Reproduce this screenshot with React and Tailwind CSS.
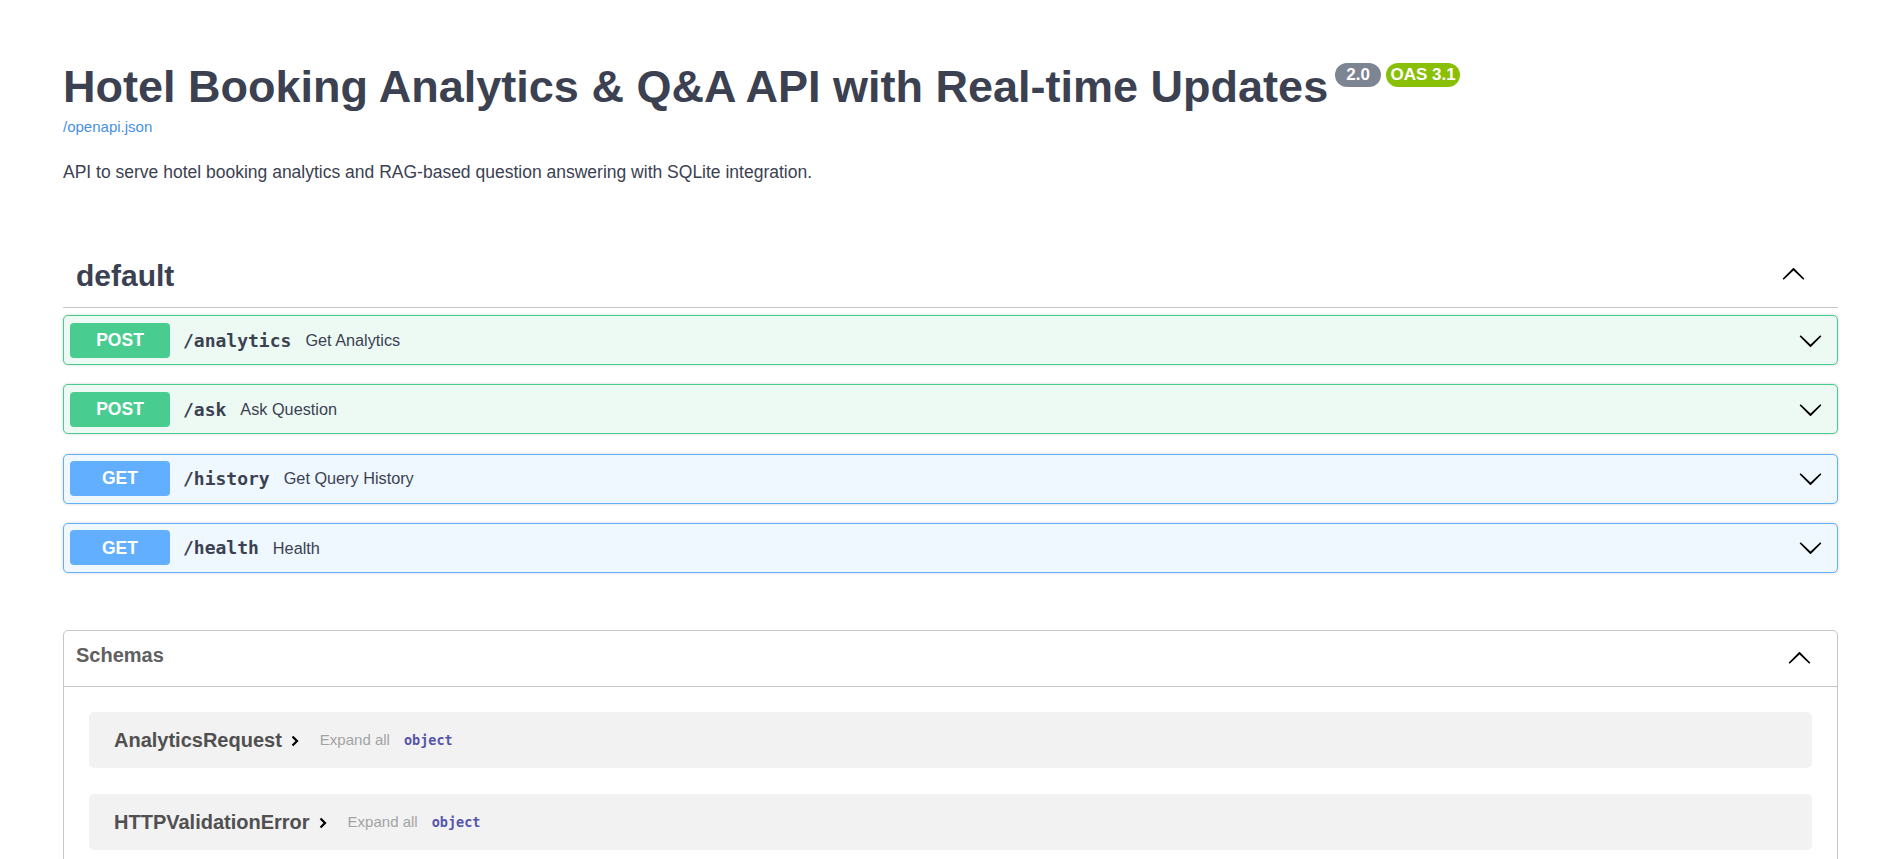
import React from "react";

const ops = [
  { method: "POST", path: "/analytics", summary: "Get Analytics" },
  { method: "POST", path: "/ask", summary: "Ask Question" },
  { method: "GET", path: "/history", summary: "Get Query History" },
  { method: "GET", path: "/health", summary: "Health" },
];

const schemas = ["AnalyticsRequest", "HTTPValidationError"];

const sans = { fontFamily: '"Liberation Sans", Arial, sans-serif' };

function Arrow({ up }) {
  return (
    <svg viewBox="0 0 20 20" className={"w-[25px] h-[25px] shrink-0 " + (up ? "rotate-180" : "")} fill="#000">
      <path d="M17.418 6.109c.272-.268.709-.268.979 0s.271.701 0 .969l-7.908 7.83c-.27.268-.707.268-.979 0l-7.908-7.83c-.27-.268-.27-.701 0-.969.271-.268.709-.268.979 0L10 13.25l7.418-7.141z" />
    </svg>
  );
}

function OpBlock({ method, path, summary }) {
  const post = method === "POST";
  return (
    <div
      className={
        "h-[50px] flex items-center pl-[6px] pr-[14px] border rounded-[5px] shadow-[0_0_3px_rgba(0,0,0,0.19)] " +
        (post ? "bg-[#edfaf4] border-[#49cc90]" : "bg-[#eff7ff] border-[#61affe]")
      }
    >
      <div
        className={
          "w-[100px] h-[35px] rounded-[4px] flex items-center justify-center text-white font-bold text-[17.5px] " +
          (post ? "bg-[#49cc90]" : "bg-[#61affe]")
        }
      >
        {method}
      </div>
      <span className="ml-[13px] font-bold text-[18px] text-[#3b4151] font-['DejaVu_Sans_Mono',monospace]">{path}</span>
      <span className="ml-[14px] text-[16.25px] text-[#3b4151]">{summary}</span>
      <div className="flex-1" />
      <Arrow />
    </div>
  );
}

function SchemaCard({ name }) {
  return (
    <div className="h-[56px] shrink-0 rounded-[5px] bg-[#f2f2f2] flex items-center pl-[25px]">
      <span className="font-bold text-[20px] text-[#505050]">{name}</span>
      <svg viewBox="0 0 8 12" className="w-[8px] h-[12px] ml-[9px] mt-[3px]">
        <polyline points="1.5,1.5 6,6 1.5,10.5" fill="none" stroke="#000" strokeWidth="2.2" />
      </svg>
      <span className="ml-[21px] text-[15px] text-[#a3a3a3]">Expand all</span>
      <span className="ml-[14px] font-bold text-[13.5px] text-[#55a] font-['DejaVu_Sans_Mono',monospace]">object</span>
    </div>
  );
}

export default function App() {
  return (
    <div className="h-[859px] overflow-hidden bg-white" style={sans}>
      <div className="ml-[63px] w-[1775px]">
        <div className="pt-[61px] flex items-start h-[113px]">
          <h1 className="text-[45px] leading-[52px] font-bold text-[#3b4151]">
            Hotel Booking Analytics &amp; Q&amp;A API with Real-time Updates
          </h1>
          <span className="mt-[2px] ml-[7px] w-[46px] h-[24px] rounded-full bg-[#7d8492] text-white font-bold text-[17px] flex items-center justify-center">
            2.0
          </span>
          <span className="mt-[2px] ml-[5px] w-[74px] h-[24px] rounded-full bg-[#89bf04] text-white font-bold text-[17px] flex items-center justify-center">
            OAS 3.1
          </span>
        </div>
        <a className="block mt-[5px] text-[15px] leading-[18px] text-[#4990e2]">/openapi.json</a>
        <p className="mt-[24px] text-[17.5px] leading-[24px] text-[#3b4151]">
          API to serve hotel booking analytics and RAG-based question answering with SQLite integration.
        </p>

        <div className="mt-[74px] flex items-center pl-[13px] pr-[32px] pb-[13px] border-b border-[#c4c6cb]">
          <h3 className="text-[30px] leading-[36px] font-bold text-[#3b4151] flex-1">default</h3>
          <div className="-mt-[3px]">
            <Arrow up />
          </div>
        </div>

        <div className="mt-[7px] flex flex-col gap-[19.3px]">
          {ops.map((o) => (
            <OpBlock key={o.path} {...o} />
          ))}
        </div>

        <div className="mt-[57px] border border-[#c4c6cb] rounded-[5px] h-[400px]">
          <div className="h-[56px] flex items-start pl-[12px] pr-[25px] border-b border-[#c4c6cb]">
            <h4 className="mt-[12px] text-[20px] leading-[24px] font-bold text-[#606060] flex-1">Schemas</h4>
            <div className="mt-[15px]">
              <Arrow up />
            </div>
          </div>
          <div className="p-[25px] flex flex-col gap-[26px]">
            {schemas.map((s) => (
              <SchemaCard key={s} name={s} />
            ))}
          </div>
        </div>
      </div>
    </div>
  );
}
